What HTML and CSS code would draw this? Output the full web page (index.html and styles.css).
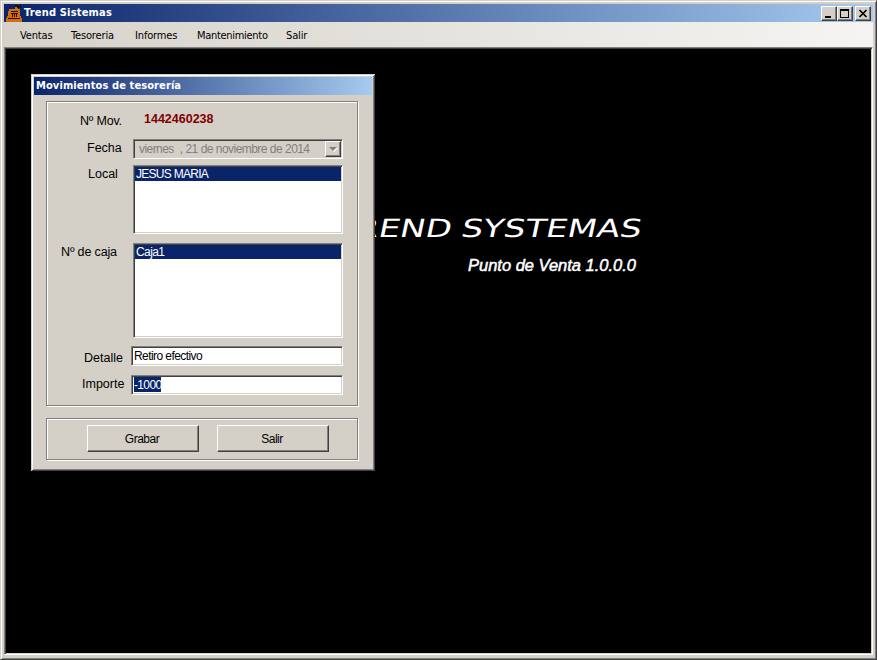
FILE: index.html
```html
<!DOCTYPE html>
<html lang="es">
<head>
<meta charset="utf-8">
<title>Trend Sistemas</title>
<link rel="stylesheet" href="styles.css">
</head>
<body>
<div class="window">
  <header class="titlebar">
    <svg class="app-icon" width="17" height="17" viewBox="0 0 17 17">
      <path fill="#d56b0c" d="M3 4h6V2h3v2h2v7h1v2h1v4H0v-4h1v-2h1V6h1z"/>
      <path fill="#1b1208" d="M9 0h6v3h-4V2H9zM5 6h7v1H5zM5 8h7v1h-1v3h-1V9H9v3H8V9H7v3H6V9H5zM2 13h12v1H2z"/>
    </svg>
    <span class="app-title">Trend Sistemas</span>
    <div class="controls">
      <button class="control"><svg width="13" height="11"><path d="M3 8h6v2H3z"/></svg></button>
      <button class="control"><svg width="13" height="11"><path fill-rule="evenodd" d="M2 1h9v9H2zM3 3v6h7V3z"/></svg></button>
      <button class="control close"><svg width="13" height="11"><path d="M3.500 2l7 7M10.500 2l-7 7" fill="none" stroke="#000" stroke-width="1.700"/></svg></button>
    </div>
  </header>
  <nav class="menu">
    <span class="ventas">Ventas</span><span class="tesoreria">Tesoreria</span><span class="informes">Informes</span><span class="mantenimiento">Mantenimiento</span><span class="menu-salir">Salir</span>
  </nav>
  <main class="desktop">
    <svg class="brand" width="320" height="80" viewBox="0 0 320 80">
      <text class="brand-name" transform="translate(2 47) skewX(-12)" textLength="117" lengthAdjust="spacingAndGlyphs" x="0" y="0">TREND</text>
      <text class="brand-name" transform="translate(129 47) skewX(-12)" textLength="180" lengthAdjust="spacingAndGlyphs" x="0" y="0">SYSTEMAS</text>
      <text class="brand-version" x="137" y="81" textLength="168" lengthAdjust="spacingAndGlyphs">Punto de Venta 1.0.0.0</text>
    </svg>
    <section class="dialog">
      <h1 class="dialog-title"><span>Movimientos de tesorería</span></h1>
      <div class="group form">
        <div class="row number"><label>Nº Mov.</label><strong>1442460238</strong></div>
        <div class="row date"><label>Fecha</label>
          <div class="sunken picker"><span>viernes&nbsp; , 21 de noviembre de 2014</span><i class="drop"><svg width="9" height="5"><path d="M1 1h8L5 5z" fill="#fff"/><path d="M0 0h8L4 4z" fill="#808080"/></svg></i></div></div>
        <div class="row local"><label>Local</label><div class="sunken list"><div class="selected"><span class="local-value">JESUS MARIA</span></div></div></div>
        <div class="row caja"><label>Nº de caja</label><div class="sunken list"><div class="selected"><span class="caja-value">Caja1</span></div></div></div>
        <div class="row detail"><label>Detalle</label><div class="sunken input"><span class="detail-value">Retiro efectivo</span></div></div>
        <div class="row amount"><label>Importe</label><div class="sunken input"><span class="highlight">-1000</span></div></div>
      </div>
      <div class="group actions">
        <button class="action"><span>Grabar</span></button>
        <button class="action"><span>Salir</span></button>
      </div>
    </section>
  </main>
</div>
</body>
</html>
```
FILE: styles.css
```css
* { box-sizing: border-box; }
body { margin: 0; overflow: hidden; font-family: "Liberation Sans", Arial, sans-serif; color: #000; }
span, label, strong { white-space: nowrap; }
.window {
  width: 877px; height: 660px; padding: 3px; background: #d4d0c8;
  border: 1px solid; border-color: #d4d0c8 #404040 #404040 #d4d0c8;
  box-shadow: inset 1px 1px #fff, inset -1px -1px #808080;
  display: flex; flex-direction: column;
}
.titlebar {
  flex: 0 0 18px; display: flex; align-items: center; padding: 0 2px;
  background: linear-gradient(90deg, #0a246a, #a6caf0);
}
.app-icon { display: block; flex: none; }
.app-title {
  margin-left: 1px; color: #fff; font: bold 11px/18px "DejaVu Sans Condensed", "DejaVu Sans", sans-serif; font-stretch: condensed;
  letter-spacing: 0.18px;
}
.controls { margin-left: auto; display: flex; }
.control {
  width: 16px; height: 15px; padding: 0; background: #d4d0c8; border: 1px solid;
  border-color: #fff #404040 #404040 #fff; box-shadow: inset -1px -1px #808080;
}
.control svg { display: block; }
.close { margin-left: 2px; }
.menu {
  flex: none; height: 25px; display: flex; padding-left: 16px; background: linear-gradient(90deg, #d6d2ca, #f5f4f2);
  font: 11px/27px "DejaVu Sans Condensed", "DejaVu Sans", sans-serif; font-stretch: condensed;
  letter-spacing: -0.15px;
}
.menu span { height: 25px; }
.ventas { width: 51px; }
.tesoreria { width: 64px; }
.informes { width: 62px; }
.mantenimiento { width: 89px; letter-spacing: -0.3px; }
.desktop {
  flex: 1; position: relative; background: #000; border: 1px solid; margin-bottom: 1px;
  border-color: #808080 #fff #fff #808080; box-shadow: inset 1px 1px #404040, inset -1px -1px #d4d0c8;
}
.brand { position: absolute; left: 326px; top: 142px; overflow: visible; fill: #fff; }
.brand-name { font: 25px "DejaVu Sans", sans-serif; }
.brand-version { font: italic 16px "Liberation Sans", Arial, sans-serif; stroke: #fff; stroke-width: 0.5px; }
.dialog {
  position: absolute; left: 26px; top: 26px; width: 344px; height: 397px; padding: 3px 3px 0; background: #d4d0c8;
  box-shadow: inset 1px 1px #d4d0c8, inset -1px -1px #404040, inset 2px 2px #fff, inset -2px -2px #808080;
}
.dialog-title {
  margin: 0; height: 18px; padding-left: 2px; color: #fff; background: linear-gradient(90deg, #0a246a, #a6caf0);
  font: bold 11px/18px "DejaVu Sans Condensed", "DejaVu Sans", sans-serif; font-stretch: condensed; letter-spacing: 0.1px;
}
.group { width: 312px; margin-left: 12px; border: 1px solid #808080; box-shadow: 1px 1px #fff, inset 1px 1px #fff; }
.form { height: 305px; margin-top: 6px; padding-top: 8px; font-size: 12px; }
.row { display: flex; }
.row label { flex: 0 0 86px; font-size: 12.500px; line-height: 18px; }
.number { height: 29px; }
.number label { padding: 2px 0 0 33px; letter-spacing: -0.2px; }
.number strong { padding-left: 11px; color: #800000; font-size: 12.500px; line-height: 18px; }
.date { height: 26px; }
.date label { padding-left: 40px; }
.local { height: 78px; }
.local label { padding-left: 41px; }
.caja { height: 103px; }
.caja label { padding-left: 14px; letter-spacing: -0.15px; }
.detail { height: 29px; }
.detail label { flex-basis: 84px; padding: 3px 0 0 37px; }
.amount label { flex-basis: 84px; padding-left: 35px; }
.sunken {
  width: 210px; background: #fff; border: 1px solid; border-color: #808080 #fff #fff #808080;
  box-shadow: inset 1px 1px #404040, inset -1px -1px #d4d0c8; padding: 2px;
}
.picker {
  display: flex; height: 20px; background: #d4d0c8; color: #808080; line-height: 17px; padding: 1px 1px 1px 5px;
  font-size: 12px;
}
.picker span { letter-spacing: -0.56px; word-spacing: 0.2px; }
.drop {
  width: 16px; height: 16px; margin-left: auto; background: #d4d0c8; border: 1px solid;
  border-color: #fff #404040 #404040 #fff; box-shadow: inset -1px -1px #808080; display: grid; place-items: center;
}
.list { height: 69px; padding: 1px; font-size: 12px; }
.caja .list { height: 95px; }
.selected { height: 14px; padding-left: 1px; line-height: 15px; color: #fff; background: #0a246a; }
.local-value { letter-spacing: -0.72px; }
.caja-value { letter-spacing: -0.6px; }
.input { width: 212px; height: 20px; padding: 1px 2px; line-height: 16px; font-size: 12px; }
.detail-value { letter-spacing: -0.58px; }
.highlight { display: inline-block; height: 15px; line-height: 16px; color: #fff; background: #0a246a; letter-spacing: -0.65px; }
.actions { display: flex; gap: 18px; height: 42px; margin-top: 12px; padding: 6px 0 0 40px; }
.action {
  width: 112px; height: 27px; padding: 0; background: #d4d0c8; border: 1px solid;
  border-color: #fff #404040 #404040 #fff; box-shadow: inset -1px -1px #808080;
  font: 12px "Liberation Sans", Arial, sans-serif; letter-spacing: -0.5px;
}
.action span { display: block; padding-right: 2px; }
```
